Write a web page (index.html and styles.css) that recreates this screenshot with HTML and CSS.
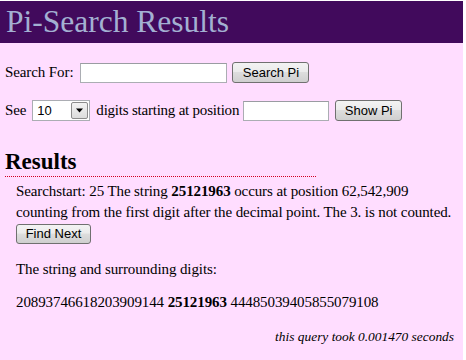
FILE: index.html
```html
<!DOCTYPE html>
<html>
<head>
<meta charset="utf-8">
<link rel="stylesheet" href="styles.css">
</head>
<body>
<div class="page">
  <div class="header"><h1 class="title">Pi-Search Results</h1></div>
  <form class="row row-search">
    <label class="label">Search For:</label>
    <input class="field field-search" type="text">
    <button class="btn btn-search" type="button">Search Pi</button>
  </form>
  <form class="row row-show">
    <span class="label">See</span>
    <span class="select"><span class="select-value">10</span><span class="select-arrow"><svg width="9" height="5" viewBox="0 0 9 5"><path d="M1 0.5h7l-3.5 4z" fill="#000"/></svg></span></span>
    <span class="label label-tight">digits starting at position</span>
    <input class="field field-pos" type="text">
    <button class="btn btn-show" type="button">Show Pi</button>
  </form>
  <h2 class="results-title">Results</h2>
  <div class="results">
    <p class="found">Searchstart: 25 The string <b>25121963</b> occurs at position 62,542,909 counting from the first digit after the decimal point. The 3. is not counted.<br><button class="btn btn-next" type="button">Find Next</button></p>
    <p class="surround">The string and surrounding digits:</p>
    <p class="digits">20893746618203909144 <b>25121963</b> 44485039405855079108</p>
  </div>
  <p class="timing">this query took 0.001470 seconds</p>
</div>
</body>
</html>
```
FILE: styles.css
```css
html { background: #ffffff; }
body {
  margin: 0;
  font-family: "Liberation Serif", "Times New Roman", serif;
  font-size: 15px;
  letter-spacing: -0.1px;
  color: #000;
}
.page {
  width: 463px;
  height: 359px;
  margin-top: 1px;
  background: #ffddff;
  overflow: hidden;
}
.header {
  background: #410a5c;
  height: 42px;
  display: flex;
  align-items: center;
  padding-left: 6px;
}
.title {
  margin: 0;
  font-weight: normal;
  font-size: 31.5px;
  letter-spacing: 0;
  color: #a3b0d2;
  line-height: 1;
}
.row {
  display: flex;
  align-items: center;
  margin: 0;
  padding-left: 5px;
}
.row-search { margin-top: 19px; height: 21px; }
.row-show { margin-top: 17px; height: 21px; }
.label { white-space: nowrap; }
.label-tight { letter-spacing: -0.22px; }
.field {
  box-sizing: border-box;
  height: 20px;
  border: 1px solid #abadb3;
  border-top-color: #9a9ca2;
  background: #fff;
  margin: 0;
  padding: 0;
}
.field-search { width: 147px; margin-left: 7px; }
.field-pos { width: 86px; margin-left: 4px; }
.btn {
  box-sizing: border-box;
  height: 21px;
  padding: 0 6px;
  border: 1px solid #707070;
  border-radius: 3px;
  background: linear-gradient(#f3f3f3 0%, #ebebeb 45%, #dddddd 50%, #cfcfcf 100%);
  font-family: "Liberation Sans", Arial, sans-serif;
  font-size: 13px;
  letter-spacing: 0;
  color: #000;
  margin: 0;
}
.btn-search { width: 77px; margin-left: 5px; }
.btn-show { width: 67px; margin-left: 6px; }
.btn-next { width: 75px; height: 20px; margin-top: 0; }
.select {
  box-sizing: border-box;
  width: 58px;
  height: 21px;
  margin-left: 6px;
  margin-right: 6px;
  border: 1px solid #abadb3;
  background: #fff;
  display: flex;
  align-items: center;
  justify-content: space-between;
  font-family: "Liberation Sans", Arial, sans-serif;
  font-size: 13px;
  letter-spacing: 0;
  padding-left: 4px;
}
.select-arrow {
  box-sizing: border-box;
  width: 17px;
  height: 17px;
  margin-right: 1px;
  border: 1px solid #8c8c8c;
  border-radius: 2px;
  background: linear-gradient(#f3f3f3, #dcdcdc);
  display: flex;
  align-items: center;
  justify-content: center;
}
.results-title {
  margin: 28px 0 0 5px;
  width: 311px;
  font-size: 23px;
  font-weight: bold;
  letter-spacing: 0;
  line-height: 25px;
  padding-bottom: 2px;
  border-bottom: 1px dotted #d00020;
}
.results { padding-left: 16px; padding-right: 8px; }
.results p { margin: 0; line-height: 21px; }
.found { margin-top: 4px !important; }
.surround { margin-top: 15px !important; }
.digits { margin-top: 12px !important; }
.timing {
  margin: 16px 9px 0 0;
  text-align: right;
  font-style: italic;
  font-size: 13.4px;
  letter-spacing: 0;
}
```
